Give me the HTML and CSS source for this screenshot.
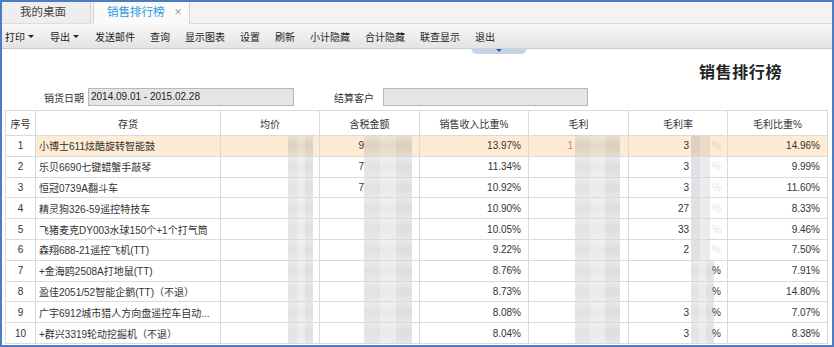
FILE: index.html
```html
<!DOCTYPE html>
<html lang="zh-CN">
<head>
<meta charset="utf-8">
<title>销售排行榜</title>
<link rel="stylesheet" href="styles.css">
</head>
<body>
<div class="frame">
  <div class="tabs">
    <div class="tab">我的桌面</div>
    <div class="tab active">销售排行榜<span class="close">×</span></div>
    <div class="tab-fill"></div>
  </div>
  <div class="toolbar">
    <span class="tool">打印<i class="caret"></i></span>
    <span class="tool">导出<i class="caret"></i></span>
    <span class="tool">发送邮件</span>
    <span class="tool">查询</span>
    <span class="tool">显示图表</span>
    <span class="tool">设置</span>
    <span class="tool">刷新</span>
    <span class="tool">小计隐藏</span>
    <span class="tool">合计隐藏</span>
    <span class="tool">联查显示</span>
    <span class="tool">退出</span>
  </div>
  <div class="content">
    <div class="handle"><i></i></div>
    <div class="title">销售排行榜</div>
    <div class="filters">
      <label class="lbl lbl1">销货日期</label>
      <div class="field f1">2014.09.01 - 2015.02.28</div>
      <label class="lbl lbl2">结算客户</label>
      <div class="field f2"></div>
    </div>
    <table class="grid">
      <colgroup>
        <col class="w-no"><col class="w-name"><col class="w-price"><col class="w-amt"><col class="w-ratio"><col class="w-gp"><col class="w-gpr"><col class="w-gps">
      </colgroup>
      <thead>
        <tr><th>序号</th><th>存货</th><th>均价</th><th>含税金额</th><th>销售收入比重%</th><th>毛利</th><th>毛利率</th><th>毛利比重%</th></tr>
      </thead>
      <tbody>
        <tr class="sel"><td class="no">1</td><td class="name">小博士611炫酷旋转智能鼓</td><td class="c3"><i class="blur"></i></td><td class="c4">9<i class="blur"></i></td><td class="num">13.97%</td><td class="c6"><span class="red">1</span><i class="blur"></i></td><td class="c7">3<span class="sp"></span>%<i class="blur wide"></i></td><td class="num">14.96%</td></tr>
        <tr><td class="no">2</td><td class="name">乐贝6690七键蜡蟹手敲琴</td><td class="c3"><i class="blur"></i></td><td class="c4">7<i class="blur"></i></td><td class="num">11.34%</td><td class="c6"><i class="blur"></i></td><td class="c7">3<span class="sp"></span>%<i class="blur wide"></i></td><td class="num">9.99%</td></tr>
        <tr><td class="no">3</td><td class="name">恒冠0739A翻斗车</td><td class="c3"><i class="blur"></i></td><td class="c4">7<i class="blur"></i></td><td class="num">10.92%</td><td class="c6"><i class="blur"></i></td><td class="c7">3<span class="sp"></span>%<i class="blur wide"></i></td><td class="num">11.60%</td></tr>
        <tr><td class="no">4</td><td class="name">精灵狗326-59遥控特技车</td><td class="c3"><i class="blur"></i></td><td class="c4"><i class="blur"></i></td><td class="num">10.90%</td><td class="c6"><i class="blur"></i></td><td class="c7">27<span class="sp"></span>%<i class="blur wide"></i></td><td class="num">8.33%</td></tr>
        <tr><td class="no">5</td><td class="name">飞猪麦克DY003水球150个+1个打气筒</td><td class="c3"><i class="blur"></i></td><td class="c4"><i class="blur"></i></td><td class="num">10.05%</td><td class="c6"><i class="blur"></i></td><td class="c7">33<span class="sp"></span>%<i class="blur wide"></i></td><td class="num">9.46%</td></tr>
        <tr><td class="no">6</td><td class="name">森翔688-21遥控飞机(TT)</td><td class="c3"><i class="blur"></i></td><td class="c4"><i class="blur"></i></td><td class="num">9.22%</td><td class="c6"><i class="blur"></i></td><td class="c7">2<span class="sp"></span>%<i class="blur wide"></i></td><td class="num">7.50%</td></tr>
        <tr><td class="no">7</td><td class="name">+金海鸥2508A打地鼠(TT)</td><td class="c3"><i class="blur"></i></td><td class="c4"><i class="blur"></i></td><td class="num">8.76%</td><td class="c6"><i class="blur"></i></td><td class="c7"><span class="sp"></span>%<i class="blur"></i></td><td class="num">7.91%</td></tr>
        <tr><td class="no">8</td><td class="name">盈佳2051/52智能企鹅(TT)（不退）</td><td class="c3"><i class="blur"></i></td><td class="c4"><i class="blur"></i></td><td class="num">8.73%</td><td class="c6"><i class="blur"></i></td><td class="c7"><span class="sp"></span>%<i class="blur"></i></td><td class="num">14.80%</td></tr>
        <tr><td class="no">9</td><td class="name">广宇6912城市猎人方向盘遥控车自动...</td><td class="c3"><i class="blur"></i></td><td class="c4"><i class="blur"></i></td><td class="num">8.08%</td><td class="c6"><i class="blur"></i></td><td class="c7">3<span class="sp"></span>%<i class="blur"></i></td><td class="num">7.07%</td></tr>
        <tr><td class="no">10</td><td class="name">+群兴3319轮动挖掘机（不退）</td><td class="c3"><i class="blur"></i></td><td class="c4"><i class="blur"></i></td><td class="num">8.04%</td><td class="c6"><i class="blur"></i></td><td class="c7">3<span class="sp"></span>%<i class="blur"></i></td><td class="num">8.38%</td></tr>
      </tbody>
    </table>
  </div>
</div>
</body>
</html>
```
FILE: styles.css
```css
html, body {
  margin: 0;
  padding: 0;
  background: #fff;
}
body {
  font-family: "Liberation Sans", "Noto Sans CJK SC", sans-serif;
  color: #333;
}
.frame {
  width: 834px;
  height: 347px;
  box-sizing: border-box;
  border: 2px solid #4b7dbf;
  overflow: hidden;
  background: #fff;
  display: flex;
  flex-direction: column;
}

/* tabs */
.tabs {
  height: 22px;
  flex: none;
  display: flex;
  background: #f3f3f3;
}
.tab {
  height: 22px;
  box-sizing: border-box;
  width: 89px;
  padding-left: 18px;
  font-size: 11.5px;
  line-height: 21px;
  color: #444;
  background: #eeeeee;
  border-right: 1px solid #d4d4d4;
  border-bottom: 1px solid #dcdcdc;
}
.tab.active {
  margin-left: 2px;
  width: 97px;
  padding-left: 13px;
  background: #fafafa;
  color: #2f9ae0;
  border-left: 1px solid #d4d4d4;
  border-bottom: none;
}
.close {
  color: #a0a0a0;
  font-size: 12px;
  margin-left: 10px;
}
.tab-fill {
  flex: 1;
  border-bottom: 1px solid #dcdcdc;
}

/* toolbar */
.toolbar {
  height: 25px;
  flex: none;
  box-sizing: border-box;
  display: flex;
  align-items: center;
  gap: 15px;
  padding-left: 3px;
  font-size: 10px;
  color: #222;
  background: linear-gradient(#f8f8f8, #ececec 60%, #e3e3e3);
  border-bottom: 1px solid #cbcbcb;
}
.tool {
  display: flex;
  align-items: center;
  white-space: nowrap;
}
.caret {
  display: inline-block;
  width: 0;
  height: 0;
  margin-left: 3px;
  margin-right: 1px;
  border-left: 3px solid transparent;
  border-right: 3px solid transparent;
  border-top: 3px solid #222;
}

/* content */
.content {
  flex: 1;
  padding-left: 3px;
}
.handle {
  margin-left: 466px;
  margin-top: -1px;
  width: 56px;
  height: 6px;
  box-sizing: border-box;
  background: #c7d4e3;
  border-radius: 0 0 7px 7px;
  display: flex;
  justify-content: center;
  padding-top: 1px;
}
.handle i {
  width: 0;
  height: 0;
  border-left: 3px solid transparent;
  border-right: 3px solid transparent;
  border-top: 3px solid #2b5ea3;
}
.title {
  margin-top: 9px;
  height: 20px;
  line-height: 20px;
  font-size: 16px;
  font-weight: bold;
  letter-spacing: 0.6px;
  color: #222;
  text-align: right;
  padding-right: 50px;
}
.filters {
  margin-top: 5px;
  height: 18px;
  display: flex;
  align-items: center;
  font-size: 10px;
}
.lbl {
  color: #333;
}
.lbl1 {
  margin-left: 39px;
}
.lbl2 {
  margin-left: 40px;
}
.field {
  height: 18px;
  box-sizing: border-box;
  background: #e5e5e5;
  border: 1px solid #b8b8b8;
  line-height: 16px;
  padding-left: 2px;
  color: #222;
}
.f1 {
  margin-left: 4px;
  width: 206px;
}
.f2 {
  margin-left: 9px;
  width: 205px;
}

/* grid */
.grid {
  margin-top: 4px;
  border-collapse: collapse;
  table-layout: fixed;
  width: 822px;
  font-size: 10px;
  color: #333;
}
.w-no { width: 30px; }
.w-name { width: 185px; }
.w-price { width: 99px; }
.w-amt { width: 100px; }
.w-ratio { width: 109px; }
.w-gp { width: 100px; }
.w-gpr { width: 99px; }
.w-gps { width: 100px; }

.grid th, .grid td {
  border: 1px solid #dadada;
  padding: 0;
  white-space: nowrap;
  overflow: hidden;
}
.grid thead tr {
  height: 25px;
}
.grid th {
  font-weight: normal;
  color: #333;
  text-align: center;
}
.grid tbody tr {
  height: 20.8px;
}
.grid td {
  position: relative;
}
.grid td.no {
  text-align: center;
}
.grid td.name {
  padding-left: 3px;
}
.grid td.num {
  text-align: right;
  padding-right: 7px;
}
.grid tr.sel td:not(.no) {
  background: #fdebd3;
}
.red {
  color: #d87a8f;
}

/* mosaic masks over hidden figures */
.blur {
  position: absolute;
  top: 0;
  bottom: 0;
  background:
    linear-gradient(180deg, rgba(255,255,255,0.3), rgba(0,0,0,0) 50%, rgba(255,255,255,0.25)),
    linear-gradient(90deg, rgba(80,80,90,0.17) 0 34%, rgba(80,80,90,0.12) 34% 67%, rgba(80,80,90,0.19) 67%);
}
.c3, .c4, .c6, .c7 {
  text-align: right;
}
.c3 .blur { right: 6px; width: 25px; }
.c4 { padding-right: 55px !important; }
.c4 .blur { right: 7px; width: 48px; }
.c6 { padding-right: 55px !important; }
.c6 .blur { right: 8px; width: 45px; }
.c7 { padding-right: 6px !important; }
.c7 .sp { display: inline-block; width: 23px; }
.c7 .blur { right: 13px; width: 23px; }
.c7 .blur.wide { right: 6px; width: 30px; background: linear-gradient(90deg, rgba(80,80,90,0.17) 0 30%, rgba(80,80,90,0.11) 30% 65%, rgba(255,255,255,0.85) 65%); }
.sel .c7 .blur.wide { background: linear-gradient(90deg, rgba(80,80,90,0.17) 0 30%, rgba(80,80,90,0.11) 30% 65%, rgba(253,235,211,0.85) 65%); }
```
